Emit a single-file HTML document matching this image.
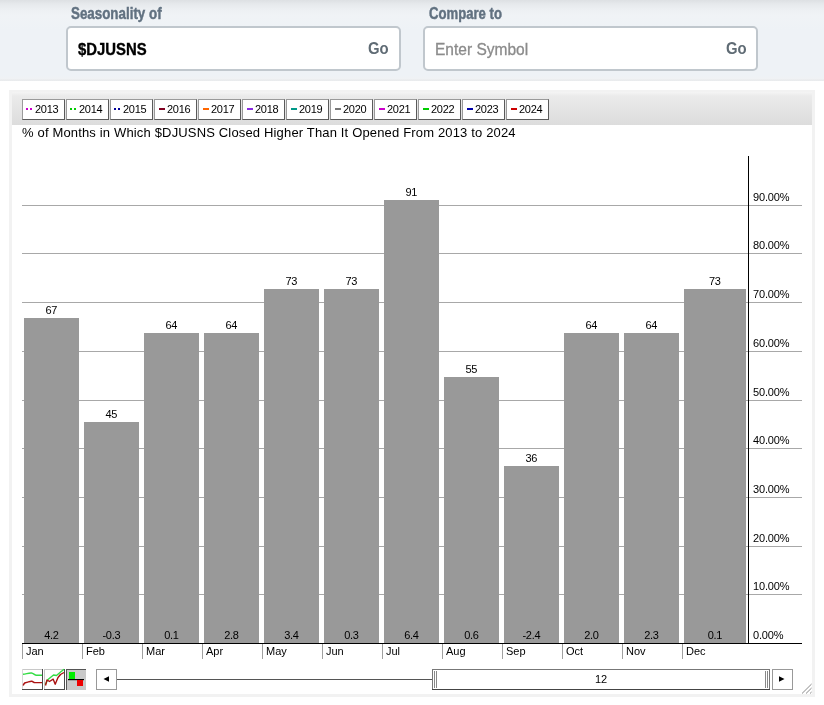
<!DOCTYPE html>
<html><head><meta charset="utf-8">
<style>
*{margin:0;padding:0;box-sizing:border-box}
html,body{width:824px;height:705px;overflow:hidden;background:#fff;font-family:"Liberation Sans",sans-serif;position:relative}
.a{position:absolute;white-space:nowrap}
#hdr{position:absolute;left:0;top:0;width:824px;height:81px;background:linear-gradient(#dde0e3 0px,#e6e9ec 4px,#edf0f3 10px,#f0f3f6 16px,#eef2f6 30px,#eef2f6 76px,#f0f2f4 79px,#e7e9eb 80px,#eceef0 81px)}
.lbl{position:absolute;font-weight:bold;font-size:16px;line-height:16px;color:#617180;-webkit-text-stroke:0.45px #617180;transform-origin:0 0;white-space:nowrap}
.box{position:absolute;top:26px;height:45px;background:#fff;border:2px solid #c0c7cd;border-radius:5px}
.go{position:absolute;font-weight:bold;font-size:16px;line-height:16px;color:#5f6b74;transform-origin:0 0}
#frame{position:absolute;left:9px;top:90px;width:806px;height:607px;border:3px solid #f2f2f2}
#legbar{position:absolute;left:12px;top:92px;width:800px;height:33px;background:linear-gradient(#f5f5f5 0,#ebebeb 4px,#dcdcdc 100%)}
.li{position:absolute;top:99px;width:43px;height:21px;background:#fff;border:1px solid;border-color:#9a9a9a #5a5a5a #5a5a5a #9a9a9a;font-size:11px;line-height:11px;color:#000}
.li span{position:absolute;left:12px;top:4px;letter-spacing:-0.3px}
.li b{position:absolute;top:8px;width:2px;height:2px}
.grid{position:absolute;left:22px;width:780px;height:1px;background:#a8a8a8}
.bar{position:absolute;background:#999}
.v{position:absolute;font-size:11px;line-height:11px;color:#000;text-align:center;letter-spacing:-0.3px;text-indent:-0.3px}
.yl{position:absolute;left:753px;font-size:11px;line-height:11px;color:#000;letter-spacing:-0.15px}
.tick{position:absolute;top:643px;width:1px;height:16px;background:#a0a0a0}
.mo{position:absolute;top:646px;font-size:11px;line-height:11px;color:#000}
.ico{position:absolute;top:669px;width:21px;height:21px;border:1px solid;border-color:#c0c0c0 #555 #555 #999;background:#fff}
.ico svg{position:absolute;left:0;top:0}
.ico.sel{background:#c8c8c8;border-color:#555 #c0c0c0 #c0c0c0 #555}
.btn{position:absolute;top:669px;width:21px;height:21px;border:1px solid;border-color:#c8c8c8 #888 #888 #c8c8c8;background:#fff}
.btn svg{position:absolute;left:0;top:0}
.rng{position:absolute;top:669px;height:21px;border:1px solid;border-color:#777 #444 #444 #777;background:#fff;font-size:11px;line-height:11px;text-align:center}
.rng i{position:absolute;top:1px;width:1px;height:17px;background:#777}
.rng span{position:absolute;left:0;right:0;top:5px}
#root{position:absolute;left:0;top:0;width:824px;height:705px;will-change:transform}
</style></head><body><div id="root">
<div id="hdr"></div>
<div class="lbl" style="left:71px;top:6px;transform:scaleX(0.835)">Seasonality of</div>
<div class="lbl" style="left:429px;top:6px;transform:scaleX(0.82)">Compare to</div>
<div class="box" style="left:66px;width:335px"></div>
<div class="box" style="left:423px;width:335px"></div>
<div class="a" style="left:78px;top:42px;font-weight:bold;font-size:16px;line-height:16px;color:#000;-webkit-text-stroke:0.35px #000;transform:scaleX(0.93);transform-origin:0 0">$DJUSNS</div>
<div class="go" style="left:368px;top:41px;transform:scaleX(0.93)">Go</div>
<div class="a" style="left:435px;top:42px;font-size:16px;line-height:16px;color:#8b8b8b;-webkit-text-stroke:0.3px #8b8b8b;transform:scaleX(0.97);transform-origin:0 0">Enter Symbol</div>
<div class="go" style="left:726px;top:41px;transform:scaleX(0.93)">Go</div>
<div id="frame"></div>
<div id="legbar"></div>
<div class="li" style="left:22px"><b style="left:3px;background:#cc00cc"></b><b style="left:7px;background:#cc00cc"></b><span>2013</span></div>
<div class="li" style="left:66px"><b style="left:3px;background:#00cc00"></b><b style="left:7px;background:#00cc00"></b><span>2014</span></div>
<div class="li" style="left:110px"><b style="left:3px;background:#000099"></b><b style="left:7px;background:#000099"></b><span>2015</span></div>
<div class="li" style="left:154px"><b style="left:4px;width:6px;background:#800020"></b><span>2016</span></div>
<div class="li" style="left:198px"><b style="left:4px;width:6px;background:#ff6600"></b><span>2017</span></div>
<div class="li" style="left:242px"><b style="left:4px;width:6px;background:#8a2be2"></b><span>2018</span></div>
<div class="li" style="left:286px"><b style="left:4px;width:6px;background:#009988"></b><span>2019</span></div>
<div class="li" style="left:330px"><b style="left:4px;width:6px;background:#777777"></b><span>2020</span></div>
<div class="li" style="left:374px"><b style="left:4px;width:6px;background:#cc00cc"></b><span>2021</span></div>
<div class="li" style="left:418px"><b style="left:4px;width:6px;background:#00cc00"></b><span>2022</span></div>
<div class="li" style="left:462px"><b style="left:4px;width:6px;background:#0000aa"></b><span>2023</span></div>
<div class="li" style="left:506px"><b style="left:4px;width:6px;background:#cc0000"></b><span>2024</span></div>
<div class="a" style="left:22px;top:126px;font-size:13px;line-height:13px;letter-spacing:0.16px;color:#000">% of Months in Which $DJUSNS Closed Higher Than It Opened From 2013 to 2024</div>
<div class="grid" style="top:594px"></div>
<div class="yl" style="top:581px">10.00%</div>
<div class="grid" style="top:546px"></div>
<div class="yl" style="top:533px">20.00%</div>
<div class="grid" style="top:497px"></div>
<div class="yl" style="top:484px">30.00%</div>
<div class="grid" style="top:448px"></div>
<div class="yl" style="top:435px">40.00%</div>
<div class="grid" style="top:400px"></div>
<div class="yl" style="top:387px">50.00%</div>
<div class="grid" style="top:351px"></div>
<div class="yl" style="top:338px">60.00%</div>
<div class="grid" style="top:302px"></div>
<div class="yl" style="top:289px">70.00%</div>
<div class="grid" style="top:253px"></div>
<div class="yl" style="top:240px">80.00%</div>
<div class="grid" style="top:205px"></div>
<div class="yl" style="top:192px">90.00%</div>
<div class="yl" style="top:630px">0.00%</div>
<div class="bar" style="left:24px;top:318px;width:55px;height:325px"></div>
<div class="v" style="left:24px;width:55px;top:305px">67</div>
<div class="v" style="left:24px;width:55px;top:630px">4.2</div>
<div class="tick" style="left:22px"></div>
<div class="mo" style="left:26px">Jan</div>
<div class="bar" style="left:84px;top:422px;width:55px;height:221px"></div>
<div class="v" style="left:84px;width:55px;top:409px">45</div>
<div class="v" style="left:84px;width:55px;top:630px">-0.3</div>
<div class="tick" style="left:82px"></div>
<div class="mo" style="left:86px">Feb</div>
<div class="bar" style="left:144px;top:333px;width:55px;height:310px"></div>
<div class="v" style="left:144px;width:55px;top:320px">64</div>
<div class="v" style="left:144px;width:55px;top:630px">0.1</div>
<div class="tick" style="left:142px"></div>
<div class="mo" style="left:146px">Mar</div>
<div class="bar" style="left:204px;top:333px;width:55px;height:310px"></div>
<div class="v" style="left:204px;width:55px;top:320px">64</div>
<div class="v" style="left:204px;width:55px;top:630px">2.8</div>
<div class="tick" style="left:202px"></div>
<div class="mo" style="left:206px">Apr</div>
<div class="bar" style="left:264px;top:289px;width:55px;height:354px"></div>
<div class="v" style="left:264px;width:55px;top:276px">73</div>
<div class="v" style="left:264px;width:55px;top:630px">3.4</div>
<div class="tick" style="left:262px"></div>
<div class="mo" style="left:266px">May</div>
<div class="bar" style="left:324px;top:289px;width:55px;height:354px"></div>
<div class="v" style="left:324px;width:55px;top:276px">73</div>
<div class="v" style="left:324px;width:55px;top:630px">0.3</div>
<div class="tick" style="left:322px"></div>
<div class="mo" style="left:326px">Jun</div>
<div class="bar" style="left:384px;top:200px;width:55px;height:443px"></div>
<div class="v" style="left:384px;width:55px;top:187px">91</div>
<div class="v" style="left:384px;width:55px;top:630px">6.4</div>
<div class="tick" style="left:382px"></div>
<div class="mo" style="left:386px">Jul</div>
<div class="bar" style="left:444px;top:377px;width:55px;height:266px"></div>
<div class="v" style="left:444px;width:55px;top:364px">55</div>
<div class="v" style="left:444px;width:55px;top:630px">0.6</div>
<div class="tick" style="left:442px"></div>
<div class="mo" style="left:446px">Aug</div>
<div class="bar" style="left:504px;top:466px;width:55px;height:177px"></div>
<div class="v" style="left:504px;width:55px;top:453px">36</div>
<div class="v" style="left:504px;width:55px;top:630px">-2.4</div>
<div class="tick" style="left:502px"></div>
<div class="mo" style="left:506px">Sep</div>
<div class="bar" style="left:564px;top:333px;width:55px;height:310px"></div>
<div class="v" style="left:564px;width:55px;top:320px">64</div>
<div class="v" style="left:564px;width:55px;top:630px">2.0</div>
<div class="tick" style="left:562px"></div>
<div class="mo" style="left:566px">Oct</div>
<div class="bar" style="left:624px;top:333px;width:55px;height:310px"></div>
<div class="v" style="left:624px;width:55px;top:320px">64</div>
<div class="v" style="left:624px;width:55px;top:630px">2.3</div>
<div class="tick" style="left:622px"></div>
<div class="mo" style="left:626px">Nov</div>
<div class="bar" style="left:684px;top:289px;width:62px;height:354px"></div>
<div class="v" style="left:684px;width:62px;top:276px">73</div>
<div class="v" style="left:684px;width:62px;top:630px">0.1</div>
<div class="tick" style="left:682px"></div>
<div class="mo" style="left:686px">Dec</div>
<div class="a" style="left:748px;top:156px;width:1px;height:488px;background:#000"></div>
<div class="a" style="left:22px;top:643px;width:780px;height:1px;background:#000"></div>
<svg class="a" style="left:0;top:0" width="824" height="705" shape-rendering="auto">
<rect x="22" y="669" width="21" height="21" fill="#fff"/>
<rect x="22" y="669" width="21" height="1" fill="#c8c8c8"/>
<rect x="22" y="669" width="1" height="21" fill="#d8d8d8"/>
<rect x="42" y="669" width="1" height="21" fill="#4a4a4a"/>
<rect x="22" y="689" width="21" height="1" fill="#4a4a4a"/>
<path d="M23 674.2 C26 674.2 28 672.8 31.5 673 C33.5 673.2 34.5 675.3 36.5 675.3 L42 675.3" stroke="#33dd44" stroke-width="1.4" fill="none"/>
<path d="M23.2 685.5 C23.8 683.5 24.5 682.5 26 682.5 C28 682.2 30 681 31.8 681.2 C33 681.5 33.5 682.6 35 682.6 L42 682.6" stroke="#aa1111" stroke-width="1.4" fill="none"/>
<rect x="44" y="669" width="21" height="21" fill="#fff"/>
<rect x="44" y="669" width="21" height="1" fill="#c8c8c8"/>
<rect x="44" y="669" width="1" height="21" fill="#c8c8c8"/>
<rect x="64" y="669" width="1" height="21" fill="#4a4a4a"/>
<rect x="44" y="689" width="21" height="1" fill="#4a4a4a"/>
<path d="M45.2 684.5 L48 679.5 L53.5 675 L56.5 675.5 L60 672.5 L64 669.2" stroke="#33dd44" stroke-width="1.4" fill="none" stroke-linejoin="round"/>
<path d="M45.5 685.5 L47 680 L49.5 681.5 L53.2 679.2 L55.2 684.2 L58 677.5 L60.5 674.5 L64 672.5" stroke="#aa1111" stroke-width="1.4" fill="none" stroke-linejoin="round"/>
<rect x="66" y="669" width="20" height="21" fill="#c9c9c9"/>
<rect x="66" y="669" width="20" height="1" fill="#555"/>
<rect x="66" y="669" width="1" height="21" fill="#555"/>
<rect x="69" y="672" width="6" height="7" fill="#00ee00"/>
<rect x="68" y="679" width="16" height="1.2" fill="#000"/>
<rect x="77" y="680" width="6" height="6" fill="#ee0000"/>
<rect x="96.5" y="669.5" width="20" height="20" fill="#fff" stroke="#999" stroke-width="1"/>
<path d="M103.5 679 L109 676.2 L109 681.8 Z" fill="#000"/>
<rect x="117" y="679" width="315" height="1" fill="#555"/>
<rect x="432.5" y="669.5" width="337" height="20" fill="#fff" stroke="#777" stroke-width="1"/>
<rect x="432" y="689" width="338" height="1" fill="#444"/>
<rect x="434" y="671" width="1" height="17" fill="#888"/>
<rect x="436" y="671" width="1" height="17" fill="#888"/>
<rect x="765" y="671" width="1" height="17" fill="#888"/>
<rect x="767" y="671" width="1" height="17" fill="#888"/>
<rect x="772.5" y="669.5" width="20" height="20" fill="#fff" stroke="#999" stroke-width="1"/>
<path d="M779 676.2 L784.5 679 L779 681.8 Z" fill="#000"/>
<path d="M802 693.5 L811.6 684 M806 693.5 L811.6 688 M810 693.5 L811.6 692" stroke="#8a8a8a" stroke-width="1"/>
</svg>
<div class="a" style="left:432px;top:674px;width:338px;text-align:center;font-size:11px;line-height:11px">12</div>
</div></body></html>
